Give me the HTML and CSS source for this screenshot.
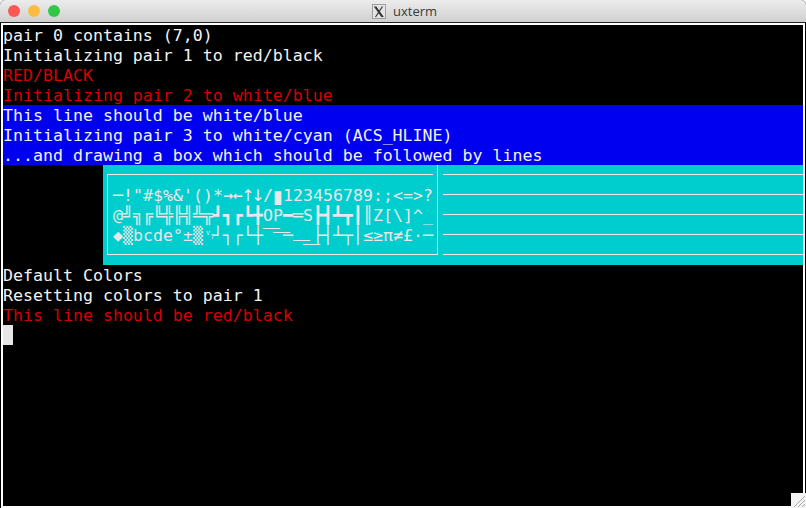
FILE: index.html
```html
<!DOCTYPE html>
<html lang="en">
<head>
<meta charset="utf-8">
<title>uxterm</title>
<link rel="stylesheet" href="styles.css">
</head>
<body>
<div class="window">
  <header class="titlebar">
    <div class="lights">
      <span class="light red"></span>
      <span class="light yellow"></span>
      <span class="light green"></span>
    </div>
    <div class="title">
      <svg class="xicon" width="14" height="15" viewBox="0 0 14 15"><rect x="0.5" y="0.5" width="13" height="14" fill="#e4e4e4" stroke="#a0a0a0"/><path d="M2.5 2.5 L10 13 M3.7 2.5 L11.2 13 M10.5 2.5 L3.5 13" stroke="#333" stroke-width="1.2" fill="none"/></svg>
      <span>uxterm</span>
    </div>
  </header>
  <main class="term">
    <div class="line">pair 0 contains (7,0)</div>
    <div class="line">Initializing pair 1 to red/black</div>
    <div class="line red-text">RED/BLACK</div>
    <div class="line red-text">Initializing pair 2 to white/blue</div>
    <div class="line on-blue">This line should be white/blue</div>
    <div class="line on-blue">Initializing pair 3 to white/cyan (ACS_HLINE)</div>
    <div class="line on-blue">...and drawing a box which should be followed by lines</div>
    <section class="cyan-row">
      <div class="box">
        <div class="acs"><span>─</span><span>!</span><span>"</span><span>#</span><span>$</span><span>%</span><span>&amp;</span><span>'</span><span>(</span><span>)</span><span>*</span><span class="arrow">→</span><span class="arrow">←</span><span class="arrow-v">↑</span><span class="arrow-v">↓</span><span>/</span><span class="block">▮</span><span>1</span><span>2</span><span>3</span><span>4</span><span>5</span><span>6</span><span>7</span><span>8</span><span>9</span><span>:</span><span>;</span><span>&lt;</span><span>=</span><span>&gt;</span><span>?</span></div>
        <div class="acs"><span>@</span><span>╝</span><span>╗</span><span>╔</span><span>╚</span><span>╬</span><span>╠</span><span>╣</span><span>╩</span><span>╦</span><span>┛</span><span>┓</span><span>┏</span><span>┗</span><span>╋</span><span>O</span><span>P</span><span>━</span><span>═</span><span>S</span><span>┣</span><span>┫</span><span>┻</span><span>┳</span><span>┃</span><span>║</span><span>Z</span><span>[</span><span>\</span><span>]</span><span>^</span><span>_</span></div>
        <div class="acs"><span>◆</span><span>▒</span><span>b</span><span>c</span><span>d</span><span>e</span><span>°</span><span>±</span><span>▒</span><span>␋</span><span>┘</span><span>┐</span><span>┌</span><span>└</span><span>┼</span><span>⎺</span><span>⎻</span><span>─</span><span>⎼</span><span>⎽</span><span>├</span><span>┤</span><span>┴</span><span>┬</span><span>│</span><span>≤</span><span>≥</span><span>π</span><span>≠</span><span>£</span><span>·</span><span>─</span></div>
      </div>
      <div class="rules">
        <i></i><i></i><i></i><i></i><i></i>
      </div>
    </section>
    <div class="line">Default Colors</div>
    <div class="line">Resetting colors to pair 1</div>
    <div class="line red-text">This line should be red/black</div>
    <div class="line"><span class="cursor"></span></div>
  </main>
  <svg class="grip" width="15" height="15" viewBox="0 0 15 15"><rect width="15" height="15" fill="#f4f4f4"/><path d="M3 14 L14 3 M7 14 L14 7 M11 14 L14 11" stroke="#a8a8a8" stroke-width="1" fill="none"/></svg>
</div>
</body>
</html>
```

FILE: styles.css
```css
* { box-sizing: border-box; }
html, body { margin: 0; padding: 0; background: #fff; }
.window {
  position: relative;
  width: 806px;
  height: 508px;
  overflow: hidden;
  display: flex;
  flex-direction: column;
  border-radius: 5px 5px 0 0;
  background: #000;
}
.titlebar {
  height: 23px;
  flex: none;
  position: relative;
  display: flex;
  align-items: center;
  justify-content: center;
  background: linear-gradient(#ececec, #d0d0d0);
  border-bottom: 1px solid #222;
}
.lights {
  position: absolute;
  left: 8px;
  top: 5px;
  display: flex;
  gap: 8px;
}
.light { width: 12px; height: 12px; border-radius: 50%; }
.red { background: #fc5753; }
.yellow { background: #fdbc40; }
.green { background: #33c748; }
.title {
  display: flex;
  align-items: center;
  gap: 7px;
  margin-left: 3px;
  font: 13px "Open Sans", "Liberation Sans", sans-serif;
  color: #3a3a3a;
}
.term {
  flex: 1;
  margin: 0 1px;
  border: 2px solid #fff;
  background: #000;
  color: #f2f2f2;
  font: 16.6px/22px "DejaVu Sans Mono", monospace;
  min-height: 0;
}
.line { height: 20px; white-space: pre; }
.red-text { color: #d80000; }
.on-blue { background: #0000f0; color: #f2f2f2; }
.cyan-row {
  display: flex;
  height: 100px;
  margin-left: 100px;
  background: #00cdcd;
  color: #e8e8e8;
  position: relative;
}
.box {
  width: 331px;
  height: 81px;
  margin: 9px 0 0 4px;
  padding: 11px 0 0 6px;
  border-bottom: 1px solid #e8e8e8;
  background: linear-gradient(#e8e8e8, #e8e8e8) top left / 326px 1px no-repeat,
              linear-gradient(#e8e8e8, #e8e8e8) top left / 1px 100% no-repeat;
  flex: none;
}
.box::after {
  content: "";
  position: absolute;
  left: 334px;
  top: 0;
  height: 90px;
  width: 1px;
  background: #e8e8e8;
}
.acs {
  display: grid;
  grid-template-columns: repeat(32, 10px);
  height: 20px;
}
.acs span { display: block; width: 10px; height: 20px; text-align: center; white-space: pre; }
.acs .arrow { font: bold 12px/22px "DejaVu Sans", sans-serif; display: flex; justify-content: center; }
.acs .arrow-v { font: 16px/22px "DejaVu Sans", sans-serif; display: flex; justify-content: center; }
.acs .block { font-size: 23px; display: flex; justify-content: center; }
.rules {
  flex: 1;
  display: flex;
  flex-direction: column;
  justify-content: space-between;
  height: 81px;
  margin: 9px 0 0 5px;
}
.rules i { display: block; height: 1px; background: #e8e8e8; }
.cursor { display: block; width: 10px; height: 20px; background: #e6e6e6; }
.grip { position: absolute; right: 0; bottom: 0; }
```
